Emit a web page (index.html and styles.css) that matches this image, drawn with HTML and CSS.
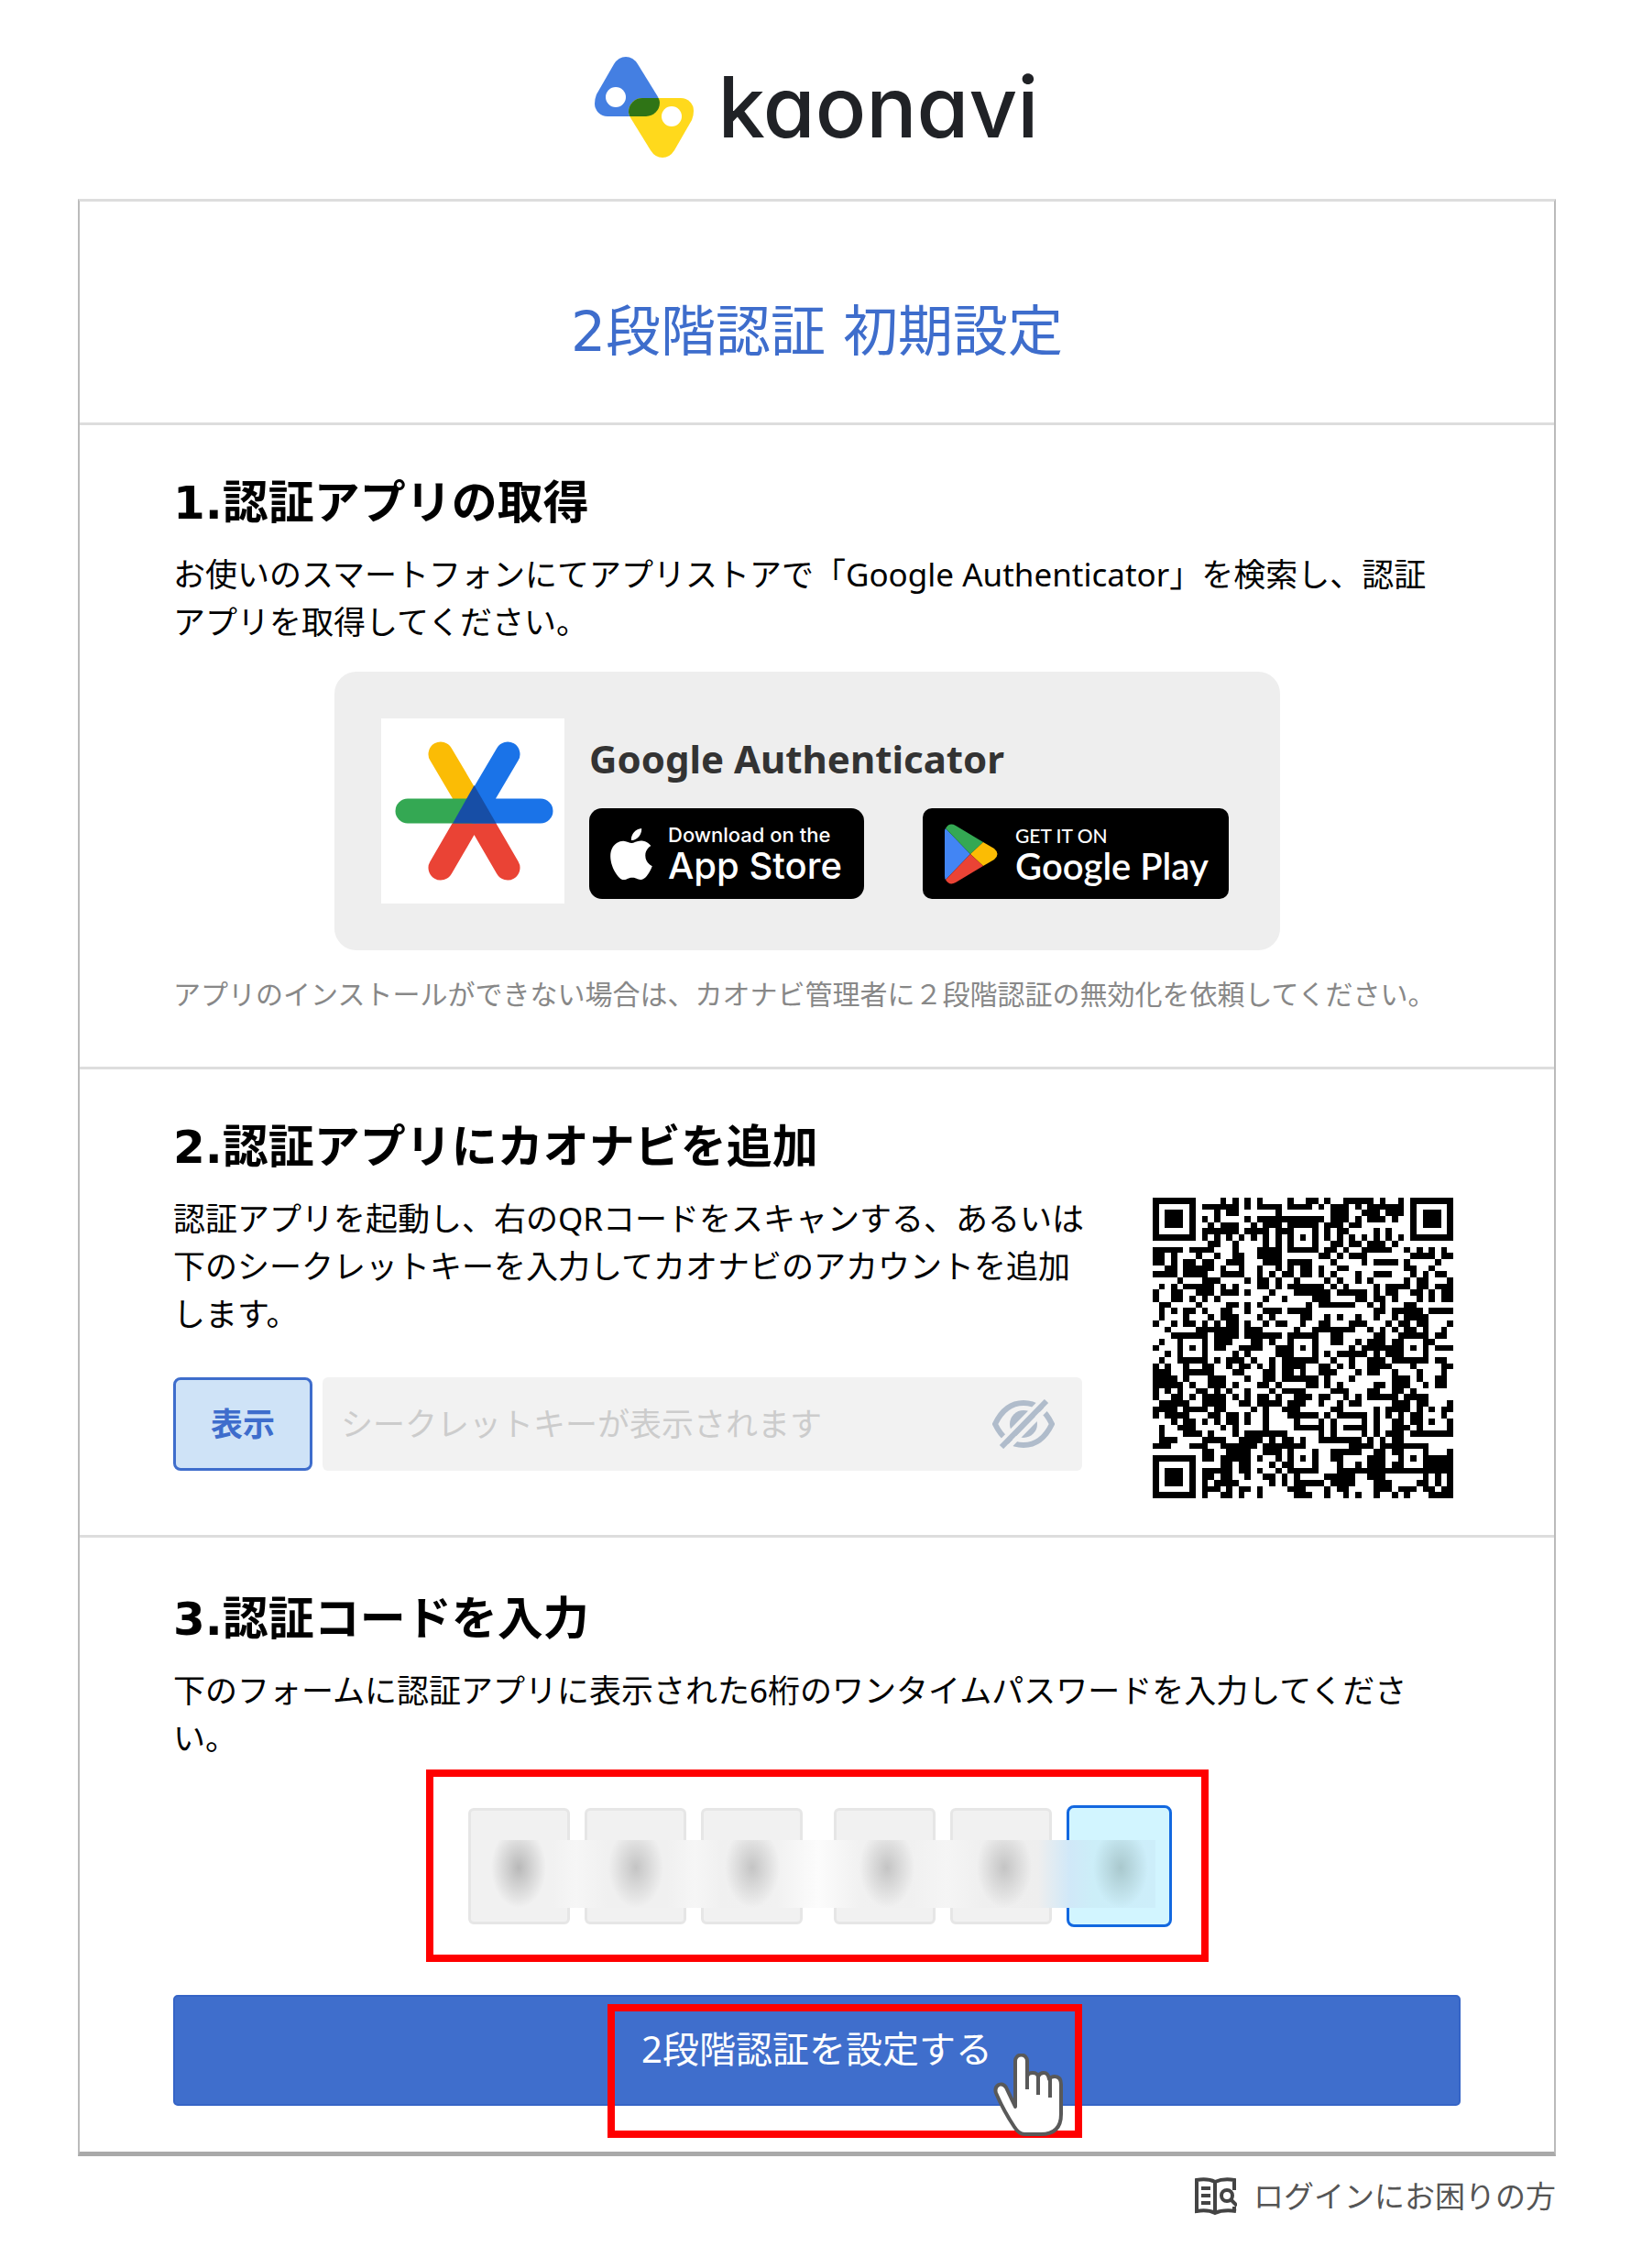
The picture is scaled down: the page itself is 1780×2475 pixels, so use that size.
FILE: index.html
```
<!DOCTYPE html>
<html lang="ja">
<head>
    <meta charset="UTF-8">
    <meta name="viewport" content="width=device-width, initial-scale=1.0">
    <title>2段階認証 初期設定</title>
    <link rel="stylesheet" href="styles.css">
</head>
<body>
    <header class="logo">
        <svg class="logo-mark" viewBox="0 0 108 110" aria-hidden="true">
            <defs>
                <path id="tri" d="M21 8Q26 0 34 0Q42 0 47 8L68 42Q71 47 71 50A15 15 0 0 1 56 65H14A14 14 0 0 1 0 51Q0 46 2 41Z"/>
                <clipPath id="triClip"><use href="#tri"/></clipPath>
            </defs>
            <use href="#tri" fill="#447fe2"/>
            <use href="#tri" fill="#ffd91c" transform="rotate(180 54 55)"/>
            <g clip-path="url(#triClip)">
                <use href="#tri" fill="#2f7416" transform="rotate(180 54 55)"/>
            </g>
            <circle cx="23" cy="44" r="11" fill="#fff"/>
            <circle cx="84" cy="65" r="11" fill="#fff"/>
        </svg>
        <span class="logo-text">kaonavi</span>
    </header>

    <main class="card">
        <h1 class="card-title">2段階認証 初期設定</h1>

        <section class="step">
            <h2>1.認証アプリの取得</h2>
            <p>お使いのスマートフォンにてアプリストアで「Google Authenticator」を検索し、認証アプリを取得してください。</p>
            <div class="app-box">
                <svg class="app-icon" viewBox="0 0 200 202" aria-hidden="true">
                    <rect width="200" height="202" fill="#fff"/>
                    <g stroke-width="27" stroke-linecap="round">
                        <path d="M65 39L101 100" stroke="#fbbc05"/>
                        <path d="M65 163L101 101M138 163L102 101" stroke="#ea4335"/>
                        <path d="M29 101H101" stroke="#34a853"/>
                        <path d="M138 39L102 100M102 101H174" stroke="#1a73e8"/>
                    </g>
                    <path d="M101.500 73L78 114.500H125.500Z" fill="#174ea6"/>
                </svg>
                <div class="app-info">
                    <h3>Google Authenticator</h3>
                    <div class="badges">
                        <a href="#" class="badge badge-apple">
                            <svg width="56" height="56" viewBox="0 0 24 24" fill="#fff" aria-hidden="true"><path d="M12.152 6.896c-.948 0-2.415-1.078-3.96-1.04-2.04.027-3.91 1.183-4.961 3.014-2.117 3.675-.546 9.103 1.519 12.09 1.013 1.454 2.208 3.09 3.792 3.039 1.52-.065 2.09-.987 3.935-.987 1.831 0 2.35.987 3.96.948 1.637-.026 2.676-1.48 3.676-2.948 1.156-1.688 1.636-3.325 1.662-3.415-.039-.013-3.182-1.221-3.22-4.857-.026-3.04 2.48-4.494 2.597-4.559-1.429-2.09-3.623-2.324-4.39-2.376-2-.156-3.675 1.09-4.61 1.09zM15.53 3.83c.843-1.012 1.4-2.427 1.245-3.83-1.207.052-2.662.805-3.532 1.818-.78.896-1.454 2.338-1.273 3.714 1.338.104 2.715-.688 3.559-1.701"/></svg>
                            <span class="badge-text">
                                <span class="badge-small">Download on the</span>
                                <span class="badge-large">App Store</span>
                            </span>
                        </a>
                        <a href="#" class="badge badge-google">
                            <svg width="58" height="66" viewBox="0 0 58 66" aria-hidden="true">
                                <path d="M1 5L28 33L1 61Q0 60 0 57V8Q0 6 1 5Z" fill="#4285f4"/>
                                <path d="M1 5Q5-2 12 2L42 20L28 33Z" fill="#34a853"/>
                                <path d="M42 20L54 27Q61 33 54 39L42 46L28 33Z" fill="#fbbc04"/>
                                <path d="M1 61Q5 68 12 64L42 46L28 33Z" fill="#ea4335"/>
                            </svg>
                            <span class="badge-text">
                                <span class="badge-small">GET IT ON</span>
                                <span class="badge-large">Google Play</span>
                            </span>
                        </a>
                    </div>
                </div>
            </div>
            <p class="note">アプリのインストールができない場合は、カオナビ管理者に２段階認証の無効化を依頼してください。</p>
        </section>

        <section class="step step-secret">
            <h2>2.認証アプリにカオナビを追加</h2>
            <div class="secret">
                <div class="secret-main">
                    <p>認証アプリを起動し、右のQRコードをスキャンする、あるいは下のシークレットキーを入力してカオナビのアカウントを追加します。</p>
                    <div class="secret-row">
                        <button type="button" class="show-btn">表示</button>
                        <div class="secret-field">
                            <input type="text" class="secret-input" aria-label="シークレットキー" placeholder="シークレットキーが表示されます" readonly>
                            <svg width="68" height="54" viewBox="0 0 68 54" fill="none" stroke="#b0bccb" stroke-width="6" aria-hidden="true">
                                <path d="M3 27Q14 4 34 4Q54 4 65 27Q54 50 34 50Q14 50 3 27Z"/>
                                <circle cx="34" cy="27" r="15" fill="#b0bccb" stroke="none"/>
                                <path d="M55 0L6 50M64 5L15 55" stroke="#f2f2f2" stroke-width="5"/>
                                <path d="M59 2L10 52"/>
                            </svg>
                        </div>
                    </div>
                </div>
                <svg class="qr" viewBox="0 0 49 49" shape-rendering="crispEdges" role="img" aria-label="QRコード">
                    <path id="qrPath"/>
                </svg>
            </div>
        </section>

        <section class="step step-code">
            <h2>3.認証コードを入力</h2>
            <p>下のフォームに認証アプリに表示された6桁のワンタイムパスワードを入力してください。</p>
            <form class="code-form">
                <div class="code-frame">
                    <div class="code-row">
                        <input type="text" class="code" maxlength="1" aria-label="1桁目">
                        <input type="text" class="code" maxlength="1" aria-label="2桁目">
                        <input type="text" class="code code-gap" maxlength="1" aria-label="3桁目">
                        <input type="text" class="code" maxlength="1" aria-label="4桁目">
                        <input type="text" class="code" maxlength="1" aria-label="5桁目">
                        <input type="text" class="code active" maxlength="1" aria-label="6桁目">
                        <div class="mask"></div>
                    </div>
                </div>
                <div class="submit-wrap">
                    <button type="button" class="submit-btn">2段階認証を設定する</button>
                    <div class="submit-frame"></div>
                    <svg class="cursor" viewBox="0 0 77 91" fill="#fff" stroke="#595959" stroke-width="4" stroke-linejoin="round" aria-hidden="true">
                        <path d="M24 58V8A6 6 0 0 1 37 8V25Q38 21 43 21Q48 21 49 25Q51 21 55 21Q60 21 61 28Q63 25 67 25Q74 25 74 34V66Q74 88 52 88H34Q28 88 23 80Q11 62 3 43Q1 37 6 34Q11 32 14 37Z"/>
                        <path d="M37 24V39M49 24V45M62 27V48" fill="none"/>
                    </svg>
                </div>
            </form>
        </section>
    </main>

    <footer class="help">
        <a href="#">
            <svg width="46" height="42" viewBox="0 0 46 42" fill="none" stroke="#444" stroke-width="4" aria-hidden="true">
                <path d="M22 5Q14 1 2 3V37Q14 35 22 39Q31 35 45 37M22 5Q31 1 43 3V14M22 5V39M43 32V37"/>
                <path d="M7 12H17M7 20H17M7 28H17"/>
                <circle cx="35" cy="20" r="6"/>
                <path d="M39 24L46 31"/>
            </svg>
            <span>ログインにお困りの方</span>
        </a>
    </footer>

    <script>
        // One string per row of the code, # is a dark module
        const rows = [
            '#######....#.#.#.#....#..##.#..#####.#..#.#######',
            '#.....#.######.#.####.####.#.###.#.######.#.....#',
            '#.###.#...#.##......#........###..###.###.#.###.#',
            '#.###.#.#.#....#.###########.###.#.###.#..#.###.#',
            '#.###.#..#.###..#.###.#####.###.##........#.###.#',
            '#.....#.######.####.###...#.#.##....#.#...#.....#',
            '#######.#.#.#.#.#.#.#.#.#.#.#.#.#.#.#.#.#.#######',
            '.........##..#....#.#.#...#..##.##.###.#.........',
            '#####.####...#...####.#####.##.#..#####..#.#.#.#.',
            '##.#...#..#..##..####......##.#.###.......####.##',
            '##.#.##.##..###...###.####...#....#.####.#....#..',
            '..##.#####.#..#..#..#.#.##.#..##.........##..#...',
            '####.####..####..#.#.##.##.#.#...#..###...#.#.##.',
            '....#...###....#.##.#..#....#.#..#.#.....#.##...#',
            '.#.#.#####.#.#...##.#.######.#.#....#.####.##.###',
            '#..##..###.###.#...#...######.#####.#.##..##.#.##',
            '#..##.#.#.#.......#..#....###....##.##.#...#.#.##',
            '.##....#....##.#.#.......#.######..#.#...##......',
            '.#.#.##.#..##..#..###.####..........##.#####.####',
            '.#...#...#.###...#.#....##..#.#..#..#..#.####....',
            '#..#.##.#.#.##.#..#.##..#..##...###...#.##.##...#',
            '..#....#######.###.....#..#######..#.#.#.##.#..#.',
            '...######.####.######.#####..##.....##..#####.##.',
            '.#..#...#.###...##.#..#...#..##..#.###.##...##...',
            '#...#.#.#.##..####..###.#.#.....#.#######.#.#.###',
            '..#.#...#....#.#....###...#.#.#####.#.###...#....',
            '.#..#####.#.###.#..#.######..#..#..###.######.##.',
            '#.#..#..##..#.##.#.#.####..##.#.#..####...#....##',
            '###..#####...##...##.##.#..###...#.##..#...#...#.',
            '####.#...###...#..##.######.#...#......###.#..##.',
            '#####.#..###.#...##.#....##.#.#.....##.###..#.##.',
            '#.#.#..##.#.#..#...#.####....###...##..##.#......',
            '#..##.#.####.#.#.##.#..###.##..#.#.#####.####....',
            '.#####..####..##.####.###..#..#.##.....###.##...#',
            '####.####.##....#.#..###.....##.....#.####.#.#.##',
            '#.####...##.##.#..#...#####.#.#####.#.#.#.##...#.',
            '...#.##.#.#.##.#..#....#...#.#....#.#..##.##.#..#',
            '.#..###....#.#....#....#####.#.####.#..###.#....#',
            '.#...###.#...#.#######.....#.#....#.#.###.#######',
            '.###....####..####.#.##.#..#######.#.#.##........',
            '###...###..######.#######.......####.########....',
            '........##..####..###.#...#..#####..##.##...#...#',
            '#######.##.#####.#..#.#.#.#..##....###..#.#.#####',
            '#.....#....##.##...#.##...#...#..#.###.##...#####',
            '#.###.#.#####.##.#..#.#####...###################',
            '#.###.#.##.##..#..##.#.#....#####..###......#.#.#',
            '#.###.#.#.####.....#.#.#####.####...###....##.#.#',
            '#.....#.###.#.##.#....###...#.##....###.###.##.##',
            '#######.#..##.#..#.....###..#..#.#..#..#.#...####'
        ];

        let d = '';
        rows.forEach((row, y) => {
            [...row].forEach((cell, x) => {
                if (cell === '#') {
                    d += `M${x} ${y}h1v1h-1z`;
                }
            });
        });
        document.getElementById('qrPath').setAttribute('d', d);
    </script>
</body>
</html>
```
FILE: styles.css
```
* {
    box-sizing: border-box;
}

body {
    margin: 0;
    padding: 62px 82px 48px 85px;
    background-color: #fff;
    color: #000;
    font-family: "Noto Sans", "Noto Sans CJK JP", sans-serif;
    font-size: 35px;
    line-height: 52px;
}

h1, h2, h3, p {
    margin: 0;
}

a {
    text-decoration: none;
}

/* Logo */
.logo {
    display: flex;
    justify-content: center;
    align-items: center;
    gap: 26px;
    height: 110px;
    margin-bottom: 45px;
}

.logo-mark {
    width: 108px;
    height: 110px;
}

.logo-text {
    color: #202226;
    font-family: Inter, sans-serif;
    font-size: 92px;
    font-weight: 500;
    line-height: 110px;
    font-feature-settings: "cv11", "ss03";
}

/* Card */
.card {
    border: 2px solid #bbb;
    border-top: 3px solid #ddd;
    border-bottom: 5px solid #a9a9a9;
}

.card-title {
    padding: 102px 20px 59px;
    color: #3e6dcc;
    font-family: "DejaVu Sans", "Noto Sans CJK JP", sans-serif;
    font-size: 60px;
    font-weight: 400;
    line-height: 80px;
    text-align: center;
}

.step {
    padding: 50px 102px 50px 102px;
    border-top: 3px solid #ddd;
}

.step h2 {
    margin-bottom: 17px;
    font-family: "DejaVu Sans", "Noto Sans CJK JP", sans-serif;
    font-size: 50px;
    font-weight: 700;
    line-height: 70px;
}

.step > p {
    padding-right: 16px;
}

/* Step 1 */
.app-box {
    display: flex;
    gap: 27px;
    margin: 28px 197px 28px 176px;
    padding: 51px;
    border-radius: 24px;
    background-color: #eee;
}

.app-icon {
    flex: none;
    width: 200px;
    height: 202px;
}

.app-info {
    flex: 1;
}

.app-info h3 {
    margin: 18px 0 28px;
    color: #333;
    font-size: 42px;
    font-weight: 700;
    line-height: 52px;
}

.badges {
    display: flex;
    gap: 64px;
    margin-right: -6px;
}

.badge {
    display: flex;
    align-items: center;
    height: 99px;
    border-radius: 14px;
    background-color: #000;
    color: #fff;
    font-family: Inter, sans-serif;
    white-space: nowrap;
}

.badge svg {
    flex: none;
}

.badge-apple {
    width: 300px;
    gap: 12px;
    padding-left: 18px;
}

.badge-google {
    width: 334px;
    gap: 19px;
    padding-left: 24px;
    border-radius: 10px;
    font-family: Lato, sans-serif;
}

.badge-text {
    display: flex;
    flex-direction: column;
}

.badge-small {
    font-size: 22px;
    font-weight: 500;
    line-height: 26px;
}

.badge-large {
    font-size: 40px;
    font-weight: 500;
    line-height: 42px;
}

.badge-google .badge-small {
    font-size: 21px;
}

.badge-google .badge-large {
    font-weight: 600;
    line-height: 40px;
}

.note {
    margin-bottom: 9px;
    color: #888;
    font-size: 30px;
    line-height: 40px;
}

/* Step 2 */
.step-secret {
    padding-bottom: 40px;
}

.secret {
    display: flex;
    gap: 58px;
    padding-right: 8px;
}

.secret-main {
    flex: 1;
}

.secret-row {
    display: flex;
    gap: 11px;
    margin: 43px 19px 0 0;
}

.show-btn {
    width: 152px;
    height: 102px;
    padding: 0;
    border: 3px solid #3e6dcc;
    border-radius: 8px;
    background-color: #cfe3f7;
    color: #3e6dcc;
    font: inherit;
    font-weight: 700;
}

.secret-field {
    display: flex;
    flex: 1;
    align-items: center;
    padding: 0 30px 0 20px;
    border-radius: 6px;
    background-color: #f2f2f2;
}

.secret-input {
    flex: 1;
    min-width: 0;
    padding: 0;
    border: 0;
    outline: 0;
    background: none;
    font: inherit;
}

.secret-input::placeholder {
    color: #ccc;
    opacity: 1;
}

.qr {
    flex: none;
    width: 328px;
    height: 328px;
    margin-top: 3px;
}

/* Step 3 */
.step-code {
    padding-top: 54px;
}

.code-frame {
    display: flex;
    justify-content: center;
    align-items: center;
    width: 854px;
    max-width: 100%;
    height: 210px;
    margin: 8px auto 36px;
    padding-left: 6px;
    border: 8px solid #f00;
}

.code-row {
    position: relative;
    display: flex;
    align-items: center;
    gap: 16px;
}

.code {
    width: 111px;
    height: 127px;
    padding: 0;
    border: 3px solid #e6e6e6;
    border-radius: 6px;
    outline: 0;
    background-color: #f1f1f1;
    font: inherit;
    text-align: center;
}

.code-gap {
    margin-right: 18px;
}

.code.active {
    width: 115px;
    height: 133px;
    border-color: #1268e0;
    border-radius: 8px;
    background-color: #d2f5ff;
}

/* Blurred digits */
.mask {
    position: absolute;
    top: 38px;
    left: 12px;
    width: 738px;
    height: 74px;
    background:
        radial-gradient(30px 44px at 43px 30px, #b8b8b8, transparent),
        radial-gradient(30px 44px at 171px 30px, #c4c4c4, transparent),
        radial-gradient(30px 44px at 298px 30px, #c4c4c4, transparent),
        radial-gradient(30px 44px at 445px 30px, #c4c4c4, transparent),
        radial-gradient(30px 44px at 573px 30px, #c4c4c4, transparent),
        radial-gradient(30px 44px at 700px 30px, #a9c8cd, transparent),
        linear-gradient(90deg, #f1f1f1 0, #f1f1f1 80px, #f6f6f6 105px, #f0f0f0 140px, #f0f0f0 205px, #f6f6f6 235px, #f0f0f0 265px, #f1f1f1 325px, #fcfcfc 370px, #f1f1f1 415px, #f0f0f0 470px, #f5f5f5 510px, #efefef 550px, #eee 610px, #d0e8f8 645px, #cceef8 670px, #cdeefa 738px);
}

.submit-wrap {
    position: relative;
}

.submit-btn {
    display: block;
    width: 100%;
    height: 121px;
    padding: 0 0 4px;
    border: 2px solid #3564c6;
    border-radius: 5px;
    background-color: #3f6ecc;
    color: #fff;
    font: inherit;
    font-size: 40px;
}

.submit-frame {
    position: absolute;
    top: 10px;
    left: calc(50% - 229px);
    width: 518px;
    height: 146px;
    border: 8px solid #f00;
    pointer-events: none;
}

.cursor {
    position: absolute;
    top: 64px;
    left: calc(50% + 192px);
    width: 77px;
    height: 91px;
    pointer-events: none;
}

/* Footer */
.help {
    display: flex;
    justify-content: flex-end;
    margin-top: 18px;
}

.help a {
    display: flex;
    align-items: center;
    gap: 18px;
    color: #555;
    font-size: 33px;
}
```
